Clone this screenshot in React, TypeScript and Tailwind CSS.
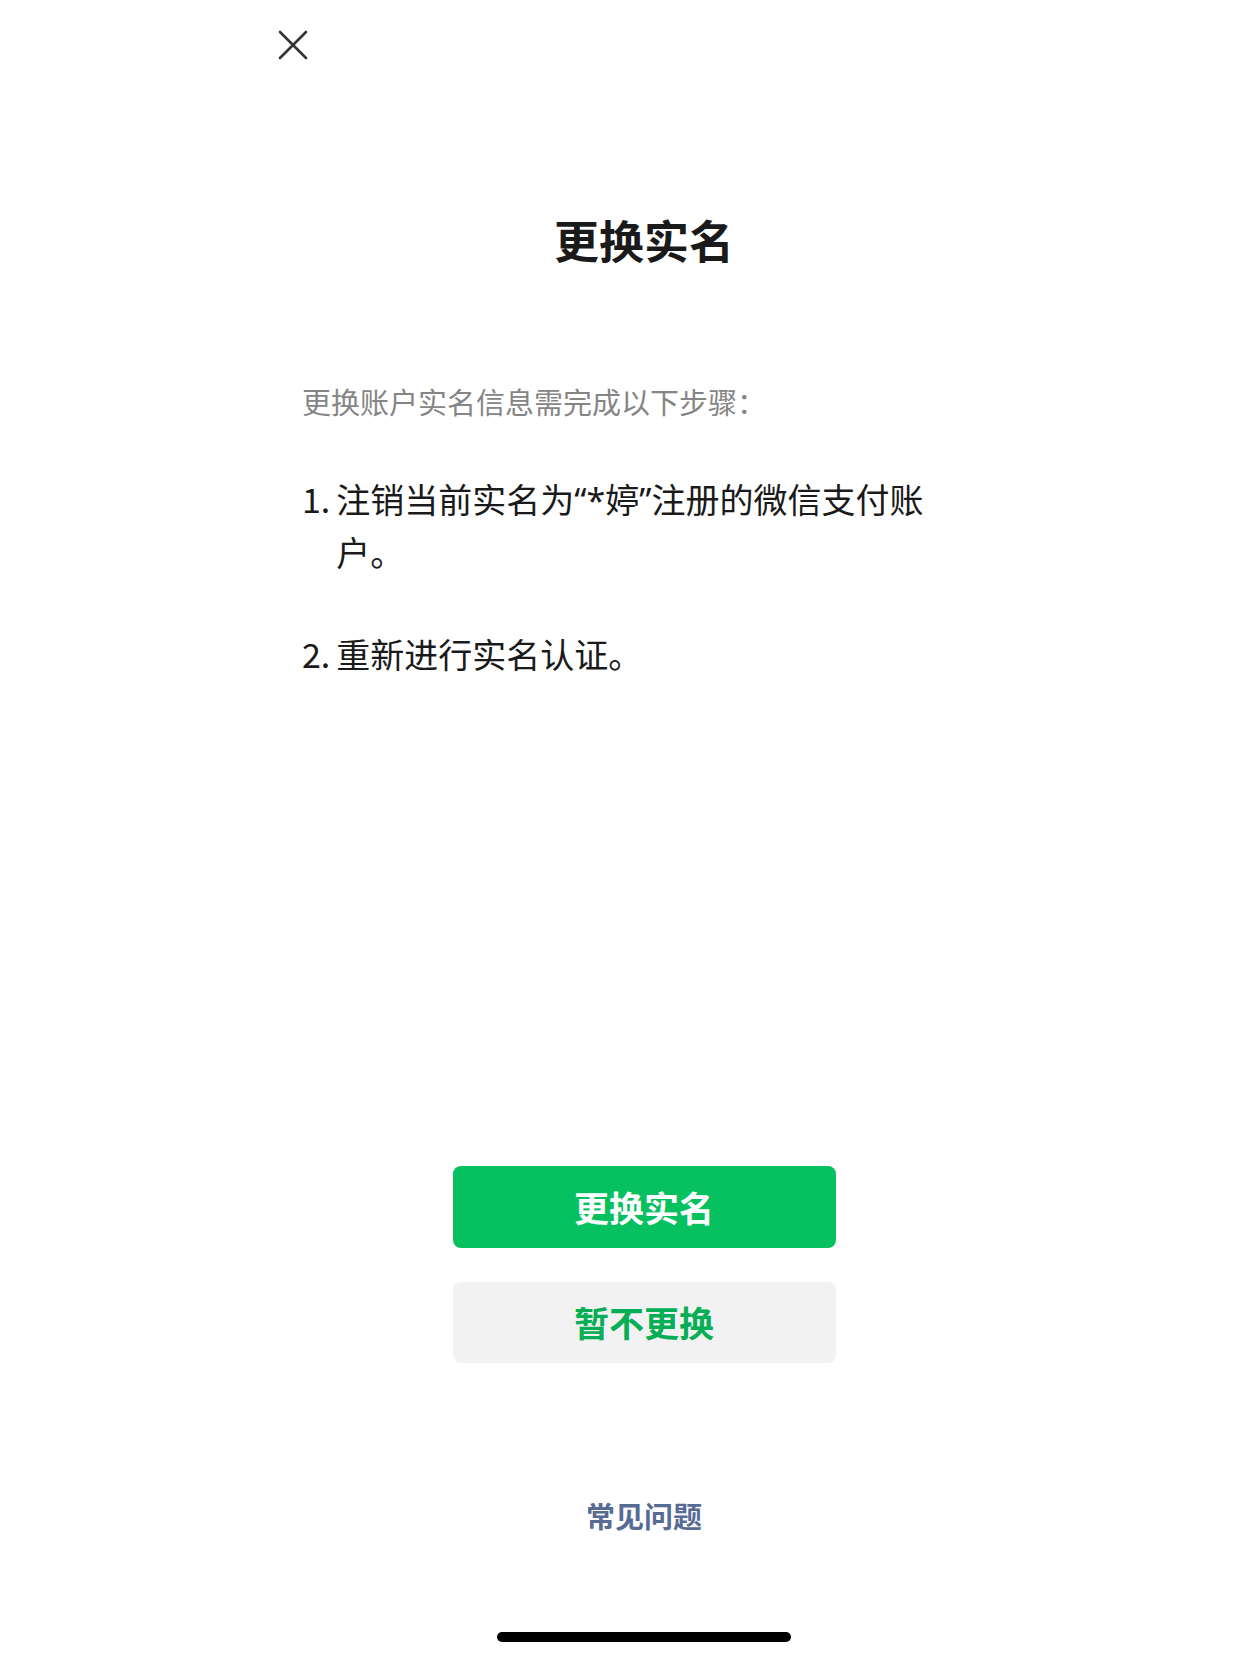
const cjk = { fontFamily: '"Noto Sans CJK SC", "Noto Sans", sans-serif' } as const

function CloseIcon() {
  return (
    <svg width="30" height="30" viewBox="0 0 30 30" fill="none">
      <path d="M2 2 L28 28 M28 2 L2 28" stroke="#333333" strokeWidth="2.6" strokeLinecap="round" />
    </svg>
  )
}

function Step({ num, children }: { num: string; children: React.ReactNode }) {
  return (
    <li className="flex gap-[6px] text-[34px] leading-[52px] text-[#1a1a1a]">
      <span className="shrink-0">{num}</span>
      <span>{children}</span>
    </li>
  )
}

export default function App() {
  return (
    <div className="min-h-[1660px] bg-white" style={cjk}>
      <div className="ml-[235px] w-[818px] h-[1660px] flex flex-col">
        <div className="pt-[30px] pl-[43px]">
          <button className="block h-[30px] w-[30px]">
            <CloseIcon />
          </button>
        </div>

        <h1 className="mt-[158px] text-center text-[45px] leading-[44px] font-bold text-[#1a1a1a]">
          更换实名
        </h1>

        <p className="mt-[123px] pl-[67px] text-[29px] leading-[32px] text-[#858585]">
          更换账户实名信息需完成以下步骤：
        </p>

        <ol className="mt-[56px] pl-[67px] flex flex-col gap-[50px]">
          <Step num="1.">
            注销当前实名为<span className="font-['Noto_Sans',sans-serif]">“*</span>婷
            <span className="font-['Noto_Sans',sans-serif]">”</span>注册的微信支付账
            <br />
            户。
          </Step>
          <Step num="2.">重新进行实名认证。</Step>
        </ol>

        <div className="mt-[486px] flex flex-col items-center gap-[34px]">
          <button className="w-[383px] h-[82px] rounded-[8px] bg-[#07c160] text-white text-[35px] font-semibold">
            更换实名
          </button>
          <button className="w-[383px] h-[81px] rounded-[8px] bg-[#f2f2f2] text-[#06ae56] text-[35px] font-semibold">
            暂不更换
          </button>
        </div>

        <p className="mt-[134px] text-center text-[29px] leading-[36px] font-semibold text-[#576b95]">
          常见问题
        </p>

        <div className="mt-[99px] mx-auto h-[10px] w-[294px] rounded-full bg-black" />
      </div>
    </div>
  )
}
